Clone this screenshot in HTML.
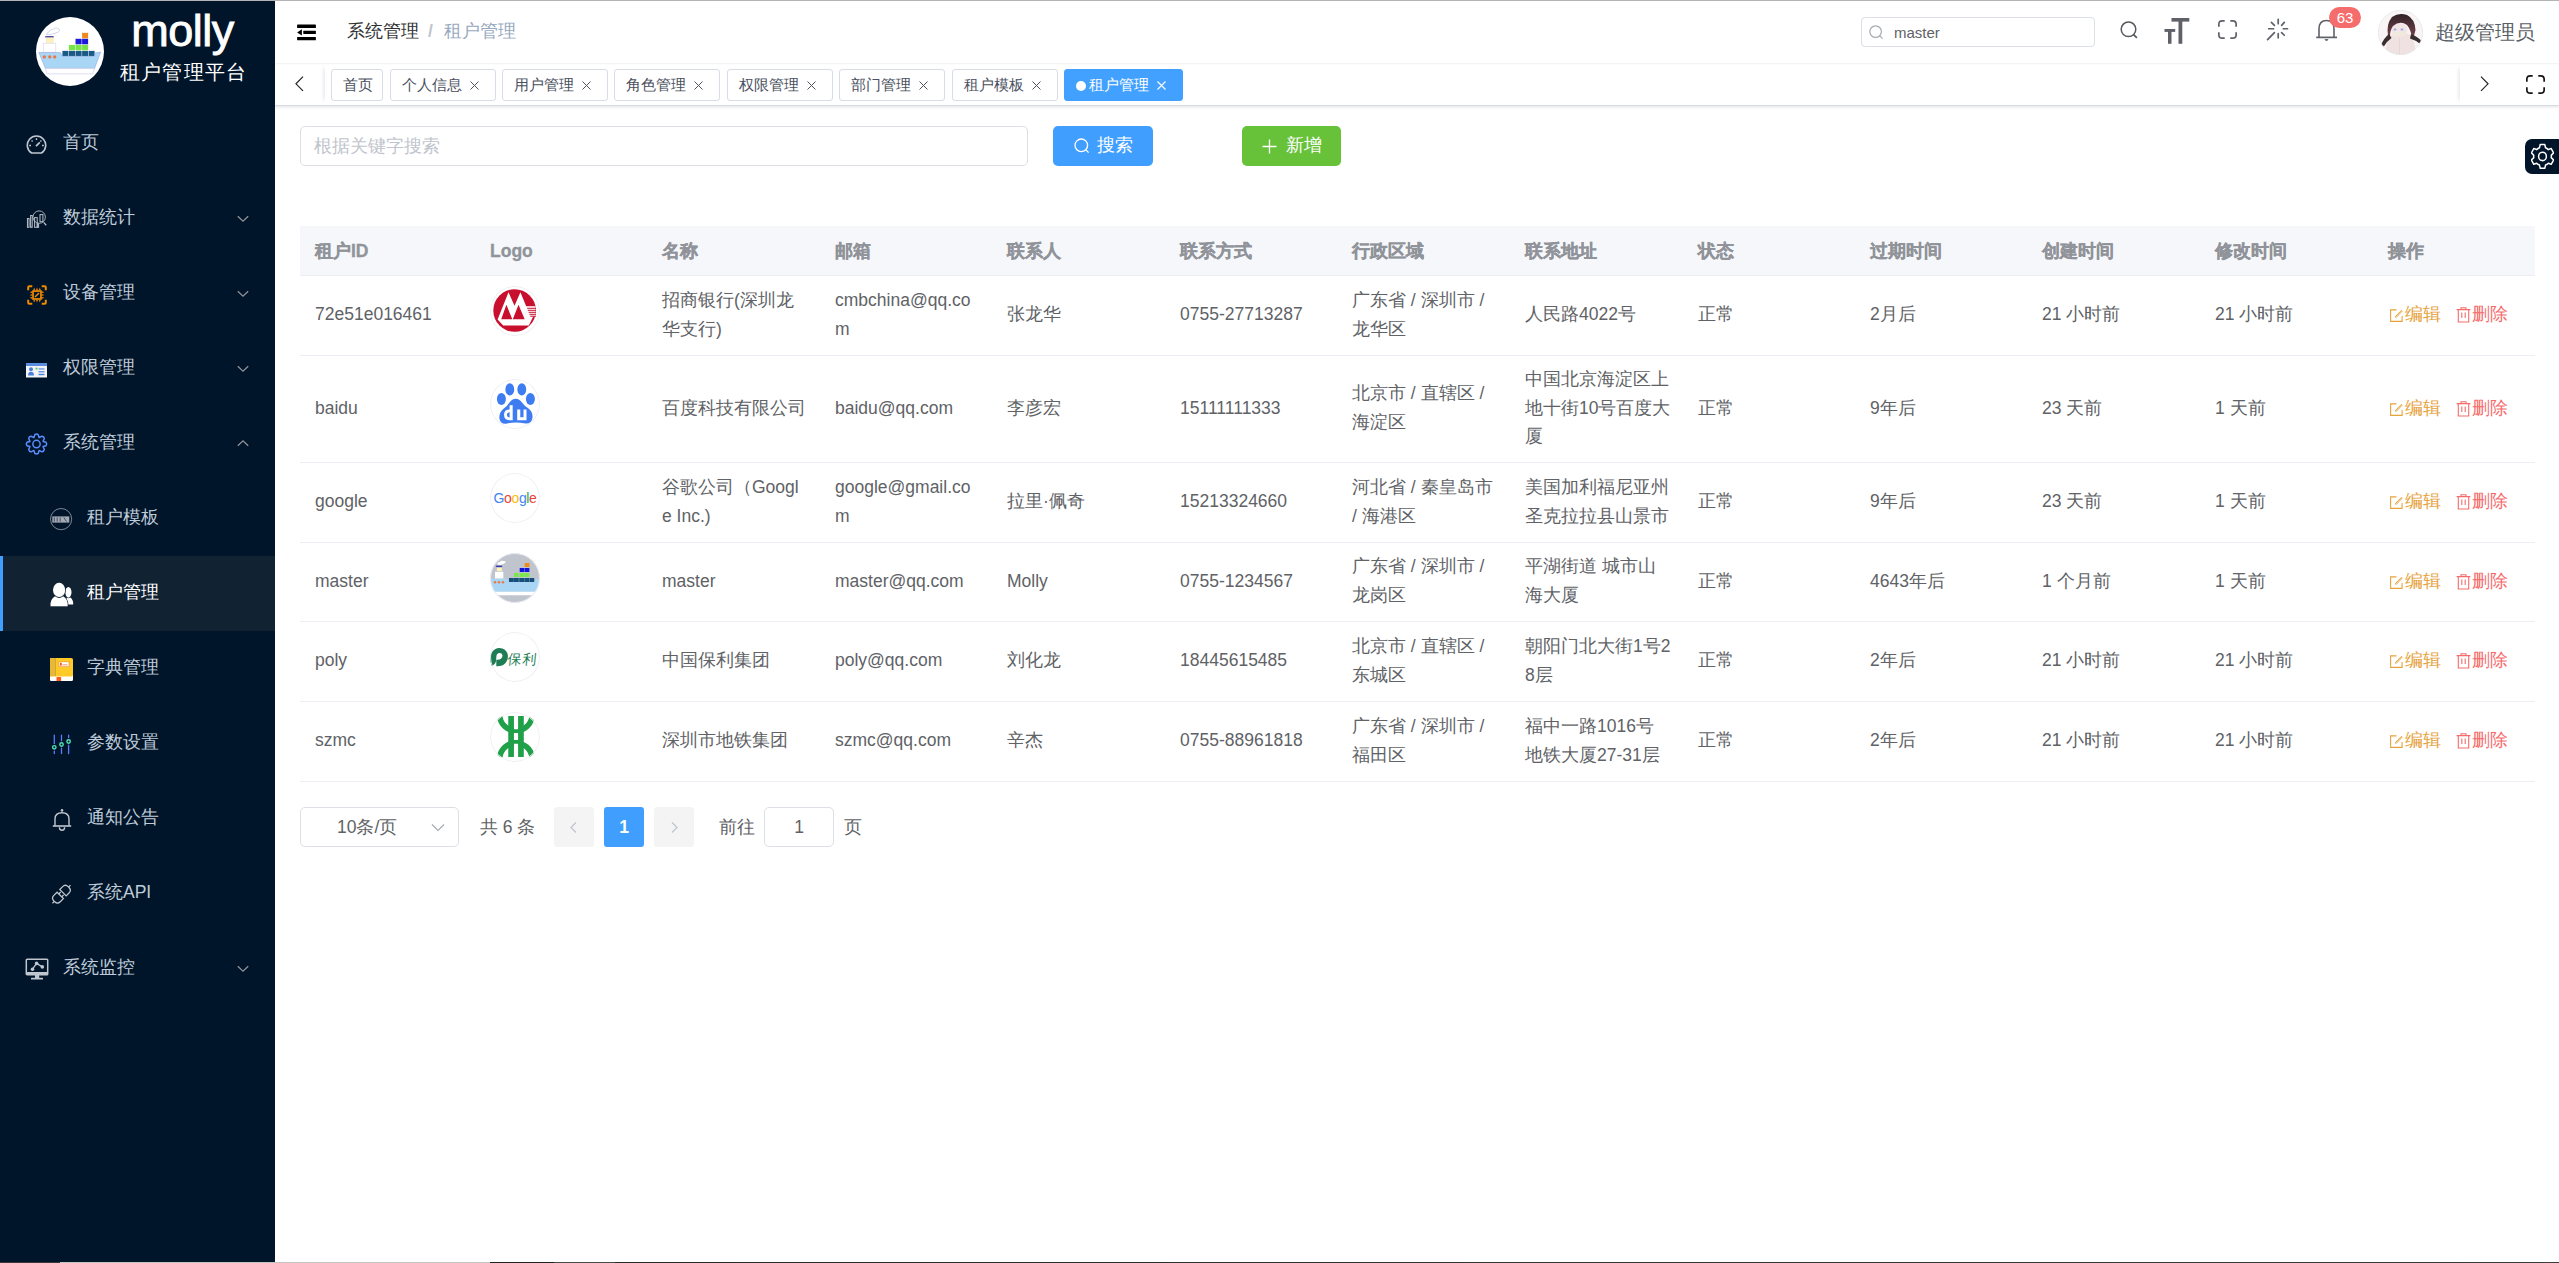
<!DOCTYPE html>
<html><head><meta charset="utf-8">
<style>
*{box-sizing:border-box;margin:0;padding:0}
html,body{width:2559px;height:1263px;overflow:hidden;background:#fff;font-family:"Liberation Sans",sans-serif;color:#606266}
#topline{position:absolute;left:0;top:0;width:2559px;height:1px;background:#b4b4b4;z-index:50}
#botline{position:absolute;left:0;top:1262px;width:2559px;height:1px;background:linear-gradient(to right,#3a3836 0,#3a3836 60px,#c4c4c0 60px,#c4c4c0 490px,#22211f 490px,#22211f 554px,#4a4a4a 554px,#4a4a4a 615px,#2a2a2a 615px,#3c3c3c 100%);z-index:50}
#side{position:absolute;left:0;top:0;width:275px;height:1263px;background:#001529}
.logo{position:absolute;left:36px;top:17px;width:68px;height:69px;border-radius:50%;background:#fff;overflow:hidden}
.brand{position:absolute;left:120px;top:1px;width:125px;text-align:center;color:#fff;font-size:45px;line-height:60px;-webkit-text-stroke:0.9px #fff;letter-spacing:-0.5px}
.brand2{position:absolute;left:120px;top:59px;width:132px;color:#fff;font-size:19.5px;line-height:26px;letter-spacing:1.2px;font-weight:500;white-space:nowrap}
.mi{position:absolute;left:0;width:275px;height:75px;color:#bfcbd9;font-size:17.5px}
.mi .t{position:absolute;left:62.5px;top:-1px;line-height:75px;white-space:nowrap}
.mi.sub .t{left:87px}
.mi svg.ic{position:absolute;left:25px;top:27px;width:22px;height:22px}
.mi.sub svg.ic{left:50px}
.mi svg.arr{position:absolute;left:236.5px;top:34px;width:12px;height:8px}
.mi.act{background:#112232;color:#fff}
.mi.act:before{content:"";position:absolute;left:0;top:0;width:3px;height:75px;background:#409eff}
#nav{position:absolute;left:275px;top:1px;width:2284px;height:62px;background:#fff;box-shadow:0 1px 1.5px rgba(0,0,0,.06);z-index:2}
.crumb{position:absolute;top:16px;font-size:17.5px;line-height:28px;white-space:nowrap}
#tags{position:absolute;left:275px;top:63px;width:2284px;height:43px;background:#fff;border-bottom:1px solid #d8dce5;box-shadow:0 1px 3px 0 rgba(0,0,0,.12)}
.tag{position:absolute;top:6px;height:32px;border:1px solid #d8dce5;border-radius:3px;background:#fff;color:#495060;font-size:15px;line-height:30px;padding-left:11px;white-space:nowrap}
.tag svg.x{position:absolute;top:11px;right:16px;width:9px;height:9px}
.tag.on{background:#42a1fe;border-color:#42a1fe;color:#fff}
.inp{position:absolute;border:1px solid #dcdfe6;border-radius:5px;background:#fff}
.btn{position:absolute;border-radius:5px;color:#fff;font-size:17.5px;white-space:nowrap}
#tbl{position:absolute;left:300px;top:226px;width:2235px}
.row{position:absolute;left:0;width:2235px;border-bottom:1px solid #ebeef5}
.row.h{background:#f5f7fa;color:#909399;font-weight:bold;-webkit-text-stroke:0.3px #909399}
.c{position:absolute;top:-1px;height:100%;display:flex;align-items:center;font-size:17.5px;line-height:28.75px;white-space:nowrap}
.lg{width:50px;height:50px;border-radius:50%;overflow:hidden;position:relative;background:#fff}
.lg:after{content:"";position:absolute;left:0;top:0;width:50px;height:50px;border-radius:50%;box-shadow:inset 0 0 0 1px #eceef3}
.lg svg{position:absolute;left:0;top:0}
.row.h .c{top:0.5px}
.op{color:#e6a23c}
.del{color:#f56c6c}
.pg{position:absolute;font-size:17.5px;white-space:nowrap;color:#606266}

</style></head><body>
<div id="topline"></div>
<div id="side">
  <div class="logo"><svg width="68" height="69" viewBox="0 0 68 69">
    <path d="M10.5,17.5 q0.5,-2.5 3,-2.8 q0.8,-2.8 4,-2.6 q1.5,-1.8 3.8,-0.8 q2.3,0.2 2.3,2.3 q-1.2,0.6 -1.6,1.8 q-2,-0.2 -3,1 q-2.5,-0.3 -3.8,1.1 q-2.5,0 -4.7,0z" fill="#fff" stroke="#c4c6e4" stroke-width="0.7"/>
    <rect x="9.4" y="19.1" width="8.2" height="1.6" fill="#3a3aa0"/>
    <rect x="10.5" y="20.7" width="6.6" height="5.5" fill="#fff2b8" stroke="#e0dcc0" stroke-width="0.4"/>
    <rect x="7.2" y="26.2" width="12.6" height="9" fill="#fff" stroke="#d4d4ea" stroke-width="0.6"/>
    <rect x="46.1" y="15.8" width="6" height="5.5" fill="#ef8a1e"/>
    <rect x="39.5" y="21.8" width="6.1" height="5.5" fill="#1a1ad8"/>
    <rect x="46.1" y="21.8" width="6" height="5.5" fill="#1a1ad8"/>
    <rect x="32.9" y="27.9" width="6.1" height="5.4" fill="#79e34a"/>
    <rect x="39.5" y="27.9" width="6.1" height="5.4" fill="#79e34a"/>
    <rect x="46.1" y="27.9" width="6" height="5.4" fill="#79e34a"/>
    <rect x="26.4" y="33.9" width="6" height="5.4" fill="#1b5a86"/>
    <rect x="32.9" y="33.9" width="6.1" height="5.4" fill="#1b5a86"/>
    <rect x="39.5" y="33.9" width="6.1" height="5.4" fill="#1b5a86"/>
    <rect x="46.1" y="33.9" width="6" height="5.4" fill="#1b5a86"/>
    <rect x="52.6" y="33.9" width="6" height="5.4" fill="#1b5a86"/>
    <path d="M2.8,35.5 L24.5,35.5 L26.4,39.3 L58.6,39.3 L58.6,36 L64.7,35 L58.6,51.4 L9.4,51.4 Z" fill="#a9d6f5" stroke="#8c9ce0" stroke-width="0.5"/>
    <path d="M9.4,51.4 L58.6,51.4 L56.5,56.9 L11,56.9 Z" fill="#fff" stroke="#c8c8e8" stroke-width="0.6"/>
    <circle cx="8.3" cy="39.9" r="1.7" fill="#e87a4a"/><circle cx="13.8" cy="39.9" r="1.7" fill="#e87a4a"/><circle cx="18.7" cy="39.9" r="1.7" fill="#e87a4a"/>
  </svg></div>
  <div class="brand">molly</div>
  <div class="brand2">租户管理平台</div>

  <div class="mi" style="top:106px"><svg class="ic" style="left:26px;top:29px;width:21px;height:19px" viewBox="0 0 21 19" fill="none" stroke="#c0c6d0" stroke-width="1.6"><path d="M5.6,18 A9.2,9.2 0 1 1 15.4,18 Z" stroke-linejoin="round"/><path d="M10.5,3.3V5M3.2,10.5H5M16,10.5H17.8M5.6,5.4L6.6,6.4M15.4,5.4L14.4,6.4" stroke-width="1.4"/><path d="M10,11.2L13.8,7.4" stroke-width="1.7"/></svg><span class="t">首页</span></div>

  <div class="mi" style="top:181px"><svg class="ic" style="left:26px;top:28px;width:21px;height:20px" viewBox="0 0 21 20" fill="none" stroke="#b8bfca" stroke-width="1"><rect x="1.45" y="9.5" width="1.6" height="8.8"/><rect x="4.6" y="6.5" width="1.6" height="11.8"/><rect x="8.6" y="8.6" width="2.6" height="9.7"/><rect x="11.3" y="14.9" width="1.3" height="3.4"/><rect x="14" y="5.6" width="2.9" height="7.1"/><circle cx="13.15" cy="8.1" r="6.2" stroke-width="0.9"/><path d="M17.7,13.4L20.2,16.2" stroke-width="1.3"/></svg><svg class="arr" viewBox="0 0 12 8" fill="none" stroke="#909399" stroke-width="1.3"><path d="M0.8,1.2L6,6.2L11.2,1.2"/></svg><span class="t">数据统计</span></div>

  <div class="mi" style="top:256px"><svg class="ic" style="left:26.5px;top:28.5px;width:20px;height:20px" viewBox="0 0 20 20"><path d="M1.2,5.3V2.3Q1.2,1.2 2.3,1.2H5.3M14.7,1.2H17.7Q18.8,1.2 18.8,2.3V5.3M18.8,14.7V17.7Q18.8,18.8 17.7,18.8H14.7M5.3,18.8H2.3Q1.2,18.8 1.2,17.7V14.7" fill="none" stroke="#f08a00" stroke-width="2"/><path d="M6.1,5.3L7.2,2.6L8.3,5.3ZM6.1,14.7L7.2,17.4L8.3,14.7ZM5.3,6.1L2.6,7.2L5.3,8.3ZM14.7,6.1L17.4,7.2L14.7,8.3ZM8.9,5.3L10,2.6L11.1,5.3ZM8.9,14.7L10,17.4L11.1,14.7ZM5.3,8.9L2.6,10L5.3,11.1ZM14.7,8.9L17.4,10L14.7,11.1ZM11.700000000000001,5.3L12.8,2.6L13.9,5.3ZM11.700000000000001,14.7L12.8,17.4L13.9,14.7ZM5.3,11.700000000000001L2.6,12.8L5.3,13.9ZM14.7,11.700000000000001L17.4,12.8L14.7,13.9Z" fill="#e07f00"/><rect x="5.2" y="5.2" width="9.6" height="9.6" fill="#f08a00"/><rect x="6.9" y="6.9" width="6.2" height="6.2" fill="#001529"/><path d="M8,12L12,8" stroke="#f08a00" stroke-width="1.4"/></svg><svg class="arr" viewBox="0 0 12 8" fill="none" stroke="#909399" stroke-width="1.3"><path d="M0.8,1.2L6,6.2L11.2,1.2"/></svg><span class="t">设备管理</span></div>

  <div class="mi" style="top:331px"><svg class="ic" style="left:26px;top:31.5px;width:21px;height:15px" viewBox="0 0 21 15"><rect x="0" y="0" width="21" height="14.5" fill="#f4f4f4"/><rect x="0" y="0" width="21" height="3" fill="#5a8de0"/><circle cx="5" cy="6.3" r="2" fill="#4a7fd8"/><path d="M2,12.5Q2,8.8 5,8.8Q8,8.8 8,12.5Z" fill="#4a7fd8"/><circle cx="10.5" cy="5.7" r="1.1" fill="#5ccf6a"/><rect x="12.5" y="5.2" width="6" height="1.5" fill="#7ea6e8"/><rect x="12.5" y="8" width="6" height="1.5" fill="#6a98e4"/><rect x="12.5" y="10.8" width="6" height="1.4" fill="#4a7fd8"/></svg><svg class="arr" viewBox="0 0 12 8" fill="none" stroke="#909399" stroke-width="1.3"><path d="M0.8,1.2L6,6.2L11.2,1.2"/></svg><span class="t">权限管理</span></div>

  <div class="mi" style="top:406px"><svg class="ic" style="left:24px;top:26px;width:25px;height:25px" viewBox="-0.6 -0.6 25.2 25.2" fill="none" stroke="#5a8cff" stroke-width="1.5" stroke-linejoin="round"><path d="M10.3,1.6 Q12,0.3 13.7,1.6 L14.6,4.6 L17.5,3.2 Q19.6,3.4 19.9,5.5 L18.6,8.4 L21.6,9.3 Q22.9,11 21.6,12.7 L18.6,13.6 L19.9,16.5 Q19.6,18.6 17.5,18.9 L14.6,17.5 L13.7,20.5 Q12,21.8 10.3,20.5 L9.4,17.5 L6.5,18.9 Q4.4,18.6 4.1,16.5 L5.4,13.6 L2.4,12.7 Q1.1,11 2.4,9.3 L5.4,8.4 L4.1,5.5 Q4.4,3.4 6.5,3.2 L9.4,4.6 Z" transform="translate(0,0.5)"/><circle cx="12" cy="11.5" r="3.7"/></svg><svg class="arr" style="top:32.5px" viewBox="0 0 12 8" fill="none" stroke="#909399" stroke-width="1.3"><path d="M0.8,6.8L6,1.8L11.2,6.8"/></svg><span class="t">系统管理</span></div>

  <div class="mi sub" style="top:481px"><svg class="ic" style="left:50.3px;top:27.3px;width:23px;height:23px" viewBox="0 0 23 23"><circle cx="11.1" cy="11.1" r="10.6" fill="none" stroke="#8a93a0" stroke-width="0.9"/><rect x="2.3" y="8.4" width="17" height="6.2" fill="#a2a9b5"/><path d="M4.3,9.4V13.6M7.2,9.4V13.6M10.2,9.4V13.6M13.8,9.4L16.5,13.6" stroke="#1b2a3c" stroke-width="0.7"/></svg><span class="t">租户模板</span></div>

  <div class="mi sub act" style="top:556px"><svg class="ic" style="left:49.5px;top:26px;width:25px;height:26px" viewBox="0 0 25 26" fill="#fff"><ellipse cx="18.4" cy="10.3" rx="3.1" ry="5.4"/><path d="M15.5,22.6 H23.2 Q23.6,18.5 20.5,15.5 Q18.6,16.6 16.5,15.8 Z"/><g stroke="#112232" stroke-width="1.3"><path d="M0.5,24.2 Q0,17.2 5,14.3 Q9.1,17.6 13.2,14.3 Q18.2,17.2 17.7,24.2 Z"/><ellipse cx="9.1" cy="7.9" rx="6.1" ry="7.1"/></g><path d="M0.5,24.2 Q0,17.2 5,14.3 Q9.1,17.6 13.2,14.3 Q18.2,17.2 17.7,24.2 Z"/><ellipse cx="9.1" cy="7.9" rx="6.1" ry="7.1"/></svg><span class="t">租户管理</span></div>

  <div class="mi sub" style="top:631px"><svg class="ic" style="left:50px;top:27px;width:23px;height:23px" viewBox="0 0 23 23"><rect x="0" y="0" width="23" height="23" rx="1.8" fill="#ffca28"/><rect x="0" y="0" width="5.5" height="18.5" fill="#e6b83a"/><rect x="5.3" y="0" width="0.7" height="18.5" fill="#caa02a"/><path d="M1.2,18.5 H21.5 Q23,18 23,17 V21.3 Q23,23 21.5,23 H1.5 Q0,23 0,21.5 V19.8 Q0.2,18.5 1.2,18.5Z" fill="#fff"/><rect x="6.5" y="19" width="4.6" height="4" fill="#ff5a1f"/><rect x="8.5" y="3.5" width="11" height="5.5" fill="#e9a030"/><rect x="9.3" y="4.2" width="9.4" height="4.1" fill="#fff"/><rect x="10" y="4.8" width="1.8" height="2.8" fill="#ff5522"/><rect x="12.5" y="6" width="5" height="1.5" fill="#ffb0a0"/></svg><span class="t">字典管理</span></div>

  <div class="mi sub" style="top:706px"><svg class="ic" style="left:50px;top:27px;width:23px;height:23px" viewBox="0 0 23 23" fill="none" stroke-linecap="round"><path d="M4.3,2.2V10.6M4.3,18.2V20.6M11.5,2.2V7.8M11.5,15.2V20.6M18.6,2.2V4.6M18.6,12.2V20.6" stroke="#5b7cff" stroke-width="1.3"/><circle cx="4.3" cy="14.3" r="1.7" stroke="#4fe3b8" stroke-width="1.4"/><circle cx="11.5" cy="11.5" r="1.7" stroke="#4fe3b8" stroke-width="1.4"/><circle cx="18.6" cy="8.5" r="1.7" stroke="#4fe3b8" stroke-width="1.4"/></svg><span class="t">参数设置</span></div>

  <div class="mi sub" style="top:781px"><svg class="ic" style="left:51.5px;top:26.5px;width:20px;height:24px" viewBox="0 0 20 24" fill="none" stroke="#c0c6d0" stroke-width="1.4"><circle cx="10" cy="2.4" r="1.3" fill="#c0c6d0" stroke="none"/><path d="M3,17.8V11Q3,4.8 10,4.8Q17,4.8 17,11V17.8"/><path d="M0.8,18H19.2" stroke-width="1.6"/><path d="M7.4,19.2Q7.4,22.3 10,22.3Q12.6,22.3 12.6,19.2"/></svg><span class="t">通知公告</span></div>

  <div class="mi sub" style="top:856px"><svg class="ic" style="left:50px;top:26px;width:24px;height:24px" viewBox="0 0 24 24" fill="none" stroke="#c0c6d0" stroke-width="1.25"><g transform="translate(11.5,12.15) rotate(-45)"><path d="M-1.8,-4.5 H-6.3 Q-10.2,-4.5 -10.2,-0.6 V0.6 Q-10.2,4.5 -6.3,4.5 H-1.8 Z"/><path d="M2.1,-4.5 H6.1 Q10,-4.5 10,-0.6 V0.6 Q10,4.5 6.1,4.5 H2.1 Z"/><path d="M-1.8,-2.1 H0.9 M-1.8,2.1 H0.9 M-12.8,0 H-10.2 M10,0 H12.7"/></g></svg><span class="t">系统API</span></div>

  <div class="mi" style="top:931px"><svg class="ic" style="left:24.5px;top:27px;width:24px;height:23px" viewBox="0 0 24 23" fill="none" stroke="#c0c6d0"><rect x="1.3" y="1.3" width="21.4" height="15.5" rx="0.8" stroke-width="1.5"/><rect x="1.3" y="14" width="21.4" height="2.8" fill="#c0c6d0" stroke="none"/><rect x="10" y="16.5" width="4.2" height="4" fill="#c0c6d0" stroke="none"/><rect x="6" y="19.8" width="12" height="1.8" rx="0.5" fill="#c0c6d0" stroke="none"/><path d="M7.5,11.2L11.6,5.4L17.3,8.9" stroke-width="1.3"/><circle cx="7.5" cy="11.2" r="1.8" fill="#c0c6d0" stroke="none"/><circle cx="11.6" cy="5.4" r="1.8" fill="#c0c6d0" stroke="none"/><circle cx="17.3" cy="8.9" r="1.8" fill="#c0c6d0" stroke="none"/></svg><svg class="arr" viewBox="0 0 12 8" fill="none" stroke="#909399" stroke-width="1.3"><path d="M0.8,1.2L6,6.2L11.2,1.2"/></svg><span class="t">系统监控</span></div>
</div>

<div id="nav">
  <svg style="position:absolute;left:21px;top:23px" width="21" height="17" viewBox="0 0 21 17"><rect x="1.1" y="0.4" width="18.8" height="3.5" rx="0.5" fill="#000"/><rect x="7.3" y="6.8" width="12.6" height="3.3" rx="0.5" fill="#000"/><path d="M1.1,8.4L5.9,5.3V11.5Z" fill="#000"/><rect x="1.1" y="12.9" width="18.8" height="3.3" rx="0.5" fill="#000"/></svg>
  <div class="crumb" style="left:72px;color:#303133">系统管理</div>
  <div class="crumb" style="left:153px;color:#c0c4cc;font-weight:bold">/</div>
  <div class="crumb" style="left:169px;color:#97a8be">租户管理</div>

  <div class="inp" style="left:1586px;top:16px;width:234px;height:30px;border-radius:4px"></div>
  <svg style="position:absolute;left:1594px;top:24px" width="15" height="15" viewBox="0 0 15 15" fill="none" stroke="#a8abb2" stroke-width="1.2"><circle cx="6.6" cy="6.6" r="5.8"/><path d="M10.8,10.8L13.6,13.6"/></svg>
  <div style="position:absolute;left:1619px;top:17px;line-height:30px;font-size:15px;color:#606266">master</div>

  <svg style="position:absolute;left:1845px;top:20px" width="19" height="19" viewBox="0 0 19 19" fill="none" stroke="#55585e" stroke-width="1.5"><circle cx="8.5" cy="8.3" r="7.3"/><path d="M13.6,13.6L16.9,16.9" stroke-width="1.7"/></svg>
  <svg style="position:absolute;left:1889px;top:16px" width="27" height="28" viewBox="0 0 27 28" fill="#5e6168"><rect x="7.5" y="1" width="17.8" height="3.6"/><rect x="14.5" y="1" width="3.8" height="25.8"/><rect x="0.5" y="12" width="10.7" height="2.9"/><rect x="4" y="12" width="3.5" height="14.8"/></svg>
  <svg style="position:absolute;left:1943px;top:19px" width="19" height="19" viewBox="0 0 19 19" fill="none" stroke="#5e6168" stroke-width="1.7"><path d="M6.7,0.85H4.3Q0.85,0.85 0.85,4.3V6.7M12.3,0.85H14.7Q18.15,0.85 18.15,4.3V6.7M18.15,12.3V14.7Q18.15,18.15 14.7,18.15H12.3M6.7,18.15H4.3Q0.85,18.15 0.85,14.7V12.3"/></svg>
  <svg style="position:absolute;left:1990px;top:17px" width="26" height="26" viewBox="0 0 26 26" fill="none" stroke="#5e6168" stroke-width="1.7" stroke-linecap="round"><path d="M13.20,1.45V5.75M13.20,15.65V19.85M3.70,10.75H8.50M18.30,10.75H22.50M6.40,4.35L9.40,7.35M19.30,4.45L16.60,7.35M16.60,14.55L19.30,17.25M9.40,14.55L2.60,21.55"/></svg>
  <svg style="position:absolute;left:2040px;top:16px" width="25" height="26" viewBox="0 0 25 26" fill="none" stroke="#5e6168" stroke-width="1.6"><path d="M4,20V12Q4,3.5 11.5,3.5Q19,3.5 19,12V20"/><path d="M1.2,20.4H22" stroke-width="1.7"/><path d="M10,22.5H13L11.5,24Z" fill="#5e6168" stroke-width="0.8"/></svg>
  <div style="position:absolute;left:2054px;top:6px;width:32px;height:21px;border-radius:10.5px;background:#f56c6c;color:#fff;font-size:15px;line-height:21px;text-align:center">63</div>

  <svg style="position:absolute;left:2103px;top:9px" width="45" height="45" viewBox="0 0 45 45"><defs><clipPath id="av"><circle cx="22.5" cy="22.5" r="22.5"/></clipPath><linearGradient id="hg" x1="0" y1="0" x2="0" y2="1"><stop offset="0" stop-color="#2e2226"/><stop offset="1" stop-color="#7a4450"/></linearGradient></defs><g clip-path="url(#av)"><rect width="45" height="45" fill="#f8f5f4"/><path d="M8,45 Q7,30 14,24 Q22,21 31,24 Q38,30 37,45Z" fill="#efe2e0"/><path d="M21.5,45 V28" stroke="#e0cfcf" stroke-width="0.6"/><ellipse cx="21.5" cy="20" rx="8" ry="7" fill="#f3e4e6"/><path d="M10,26 Q8,14 14,7 Q21,2 29,5 Q37,9 37.5,20 Q37,25 34,28 Q33,20 29,15 Q22,10 15,16 Q12,20 12,27Z" fill="url(#hg)"/><path d="M11,24 Q6,28 3,35 L5.5,37 Q9,31 13.5,28Z" fill="#3a2d30"/><path d="M33,24 Q40,27 43.5,31 L41.5,33.5 Q37,30 32,28.5Z" fill="#3a2d30"/><ellipse cx="17" cy="19.5" rx="1.5" ry="0.9" fill="#8fb0d8"/><ellipse cx="24" cy="19.5" rx="1.5" ry="0.9" fill="#8fb0d8"/><path d="M15,23 Q21.5,21 28,23 L28,26 Q21.5,24 15,26Z" fill="#f0ead8"/></g><circle cx="22.5" cy="22.5" r="22.1" fill="none" stroke="#e6e9ef" stroke-width="0.8"/></svg>
  <div style="position:absolute;left:2159.5px;top:17px;font-size:19.8px;line-height:28px;color:#5a5e66;white-space:nowrap">超级管理员</div>
</div>
<div id="tags">
  <svg style="position:absolute;left:20px;top:13px" width="9" height="16" viewBox="0 0 9 16" fill="none" stroke="#222" stroke-width="1.2"><path d="M8,0.7L1,7.8L8,14.9"/></svg>
  <div style="position:absolute;left:50px;top:3px;width:8px;height:36px;box-shadow:-3px 0 4px -2px rgba(0,0,0,.12)"></div>
  <div class="tag" style="left:56px;width:52px">首页</div>
  <div class="tag" style="left:115px;width:106px">个人信息<svg class="x" viewBox="0 0 9 9" stroke="#50545c" stroke-width="1"><path d="M0.5,0.5L8.5,8.5M8.5,0.5L0.5,8.5"/></svg></div>
  <div class="tag" style="left:227px;width:106px">用户管理<svg class="x" viewBox="0 0 9 9" stroke="#50545c" stroke-width="1"><path d="M0.5,0.5L8.5,8.5M8.5,0.5L0.5,8.5"/></svg></div>
  <div class="tag" style="left:339px;width:106px">角色管理<svg class="x" viewBox="0 0 9 9" stroke="#50545c" stroke-width="1"><path d="M0.5,0.5L8.5,8.5M8.5,0.5L0.5,8.5"/></svg></div>
  <div class="tag" style="left:452px;width:106px">权限管理<svg class="x" viewBox="0 0 9 9" stroke="#50545c" stroke-width="1"><path d="M0.5,0.5L8.5,8.5M8.5,0.5L0.5,8.5"/></svg></div>
  <div class="tag" style="left:564px;width:106px">部门管理<svg class="x" viewBox="0 0 9 9" stroke="#50545c" stroke-width="1"><path d="M0.5,0.5L8.5,8.5M8.5,0.5L0.5,8.5"/></svg></div>
  <div class="tag" style="left:677px;width:106px">租户模板<svg class="x" viewBox="0 0 9 9" stroke="#50545c" stroke-width="1"><path d="M0.5,0.5L8.5,8.5M8.5,0.5L0.5,8.5"/></svg></div>
  <div class="tag on" style="left:789px;width:119px;padding-left:24px"><span style="position:absolute;left:11px;top:10.5px;width:10px;height:10px;border-radius:50%;background:#fff"></span>租户管理<svg class="x" viewBox="0 0 9 9" stroke="#fff" stroke-width="1.1"><path d="M0.5,0.5L8.5,8.5M8.5,0.5L0.5,8.5"/></svg></div>
  <div style="position:absolute;left:2185px;top:3px;width:8px;height:36px;box-shadow:-3px 0 4px -2px rgba(0,0,0,.12)"></div>
  <svg style="position:absolute;left:2205px;top:13px" width="9" height="16" viewBox="0 0 9 16" fill="none" stroke="#222" stroke-width="1.2"><path d="M1,0.7L8,7.8L1,14.9"/></svg>
  <svg style="position:absolute;left:2251px;top:11.5px" width="19" height="19" viewBox="0 0 19 19" fill="none" stroke="#151515" stroke-width="1.7"><path d="M6.7,0.85H4.3Q0.85,0.85 0.85,4.3V6.7M12.3,0.85H14.7Q18.15,0.85 18.15,4.3V6.7M18.15,12.3V14.7Q18.15,18.15 14.7,18.15H12.3M6.7,18.15H4.3Q0.85,18.15 0.85,14.7V12.3"/></svg>
</div>
<div style="position:absolute;left:2525px;top:139px;width:40px;height:35px;border-radius:7px;background:#001529"><svg style="position:absolute;left:6px;top:4px" width="23" height="26" viewBox="0 0 25 26" preserveAspectRatio="none" fill="none" stroke="#fff" stroke-width="1.6" stroke-linejoin="round"><path d="M10,1.5H15L15.8,4.8Q17.5,5.5 18.8,6.6L22,5.6L24.5,9.9L22,12.3Q22.2,13 22,14.7L24.5,17L22,21.3L18.8,20.3Q17.5,21.4 15.8,22.1L15,25.3H10L9.2,22.1Q7.5,21.4 6.2,20.3L3,21.3L0.5,17L3,14.7Q2.8,13 3,12.3L0.5,9.9L3,5.6L6.2,6.6Q7.5,5.5 9.2,4.8Z"/><circle cx="12.5" cy="13.4" r="4.2"/></svg></div>

<div class="inp" style="left:300px;top:126px;width:728px;height:40px"><span style="position:absolute;left:13px;top:0;line-height:38px;font-size:17.5px;color:#c0c4cc">根据关键字搜索</span></div>
<div class="btn" style="left:1053px;top:126px;width:100px;height:40px;background:#409eff"><svg style="position:absolute;left:21px;top:12px" width="16" height="16" viewBox="0 0 16 16" fill="none" stroke="#fff" stroke-width="1.3"><circle cx="7.3" cy="7.3" r="6.3"/><path d="M11.8,11.8L14.6,14.6"/></svg><span style="position:absolute;left:44px;top:-1.5px;line-height:40px">搜索</span></div>
<div class="btn" style="left:1242px;top:126px;width:99px;height:40px;background:#67c23a"><svg style="position:absolute;left:20px;top:12.5px" width="15" height="15" viewBox="0 0 15 15" stroke="#fff" stroke-width="1.3"><path d="M7.5,0.5V14.5M0.5,7.5H14.5"/></svg><span style="position:absolute;left:44px;top:-1px;line-height:40px">新增</span></div>
<div id="tbl">
<div class="row h" style="top:0;height:50px"><div class="c" style="left:15px">租户ID</div><div class="c" style="left:190px">Logo</div><div class="c" style="left:362px">名称</div><div class="c" style="left:535px">邮箱</div><div class="c" style="left:707px">联系人</div><div class="c" style="left:880px">联系方式</div><div class="c" style="left:1052px">行政区域</div><div class="c" style="left:1225px">联系地址</div><div class="c" style="left:1398px">状态</div><div class="c" style="left:1570px">过期时间</div><div class="c" style="left:1742px">创建时间</div><div class="c" style="left:1915px">修改时间</div><div class="c" style="left:2088px">操作</div></div>
<div class="row" style="top:50px;height:80px"><div class="c" style="left:15px">72e51e016461</div><div class="lg" style="position:absolute;left:190px;top:10px"><svg width="50" height="50" viewBox="0 0 50 50"><circle cx="24.6" cy="24.5" r="21.3" fill="#c8102e"/><path d="M7.6,33.4 L18.5,6.2 L24.5,19.8 L30.4,6.2 L36.2,20.3 L45.5,20.3 L45.8,30.5 L43.2,30.5 L38.8,39.6 L13.2,39.6 Z" fill="#fff"/><path d="M11.2,33.3 L16.4,18.7 L22.3,33.3Z M22.8,33.3 L28.5,18.7 L34.7,33.3Z" fill="#c8102e"/><path d="M37.2,22.3H46M37.8,24.3H46M38.6,26.3H46M39.4,28.3H46M40.2,30.2H46" stroke="#c8102e" stroke-width="1"/></svg></div><div class="c" style="left:362px">招商银行(深圳龙<br>华支行)</div><div class="c" style="left:535px">cmbchina@qq.co<br>m</div><div class="c" style="left:707px">张龙华</div><div class="c" style="left:880px">0755-27713287</div><div class="c" style="left:1052px">广东省 / 深圳市 /<br>龙华区</div><div class="c" style="left:1225px">人民路4022号</div><div class="c" style="left:1398px">正常</div><div class="c" style="left:1570px">2月后</div><div class="c" style="left:1742px">21 小时前</div><div class="c" style="left:1915px">21 小时前</div><div class="c" style="left:2089.5px"><span class="op" style="display:flex;align-items:center"><svg style="margin-right:2px;margin-top:2px" width="13" height="13" viewBox="0 0 13 13" fill="none" stroke="#e6a23c" stroke-width="1.1"><path d="M6.5,0.9H0.6V12.4H12.1V7"/><path d="M5.2,7.8L11.2,1.6Q12,1.3 12.2,2.2L6.1,8.5Z" stroke-width="1"/></svg>编辑</span><span class="del" style="display:flex;align-items:center;margin-left:15.5px"><svg style="margin-right:1px;margin-top:1px" width="15" height="16" viewBox="0 0 15 16" fill="none" stroke="#f56c6c" stroke-width="1.1"><path d="M0.6,2.6H14.4M5,2.6V0.8H10V2.6M2.3,2.6V15H12.7V2.6M5.8,5.5V11M9.2,5.5V11"/></svg>删除</span></div></div>
<div class="row" style="top:130px;height:107px"><div class="c" style="left:15px">baidu</div><div class="lg" style="position:absolute;left:190px;top:23px"><svg width="50" height="50" viewBox="0 0 50 50" fill="#3e7cf2"><ellipse cx="19.8" cy="10.4" rx="4.4" ry="6.1"/><ellipse cx="31.8" cy="10.4" rx="4.4" ry="6.1"/><ellipse cx="11.4" cy="20" rx="4.5" ry="6"/><ellipse cx="40.4" cy="20" rx="4.5" ry="6"/><path d="M25.6,19.7 Q29.5,19.7 32,23.5 Q34,26.5 38.5,29.5 Q43,33 42.5,38.5 Q42,44.8 35.5,44.5 Q30,43.5 25.8,43.5 Q21.5,43.5 16,44.8 Q9.5,45 9.3,38.5 Q9.5,33 13.5,29.8 Q17.5,26.8 19.5,23.5 Q22,19.7 25.6,19.7Z"/><path d="M19.6,26.2H22.7V41.2H19.3Q14,41.2 14,35.8Q14,30.4 19.6,30.4Z M19.6,33.2Q17,33.2 17,35.8Q17,38.4 19.6,38.4Z M27.2,30.4H30.3V38.3H33.5V30.4H36.5V41.2H27.2Z" fill="#fff" fill-rule="evenodd"/></svg></div><div class="c" style="left:362px">百度科技有限公司</div><div class="c" style="left:535px">baidu@qq.com</div><div class="c" style="left:707px">李彦宏</div><div class="c" style="left:880px">15111111333</div><div class="c" style="left:1052px">北京市 / 直辖区 /<br>海淀区</div><div class="c" style="left:1225px">中国北京海淀区上<br>地十街10号百度大<br>厦</div><div class="c" style="left:1398px">正常</div><div class="c" style="left:1570px">9年后</div><div class="c" style="left:1742px">23 天前</div><div class="c" style="left:1915px">1 天前</div><div class="c" style="left:2089.5px"><span class="op" style="display:flex;align-items:center"><svg style="margin-right:2px;margin-top:2px" width="13" height="13" viewBox="0 0 13 13" fill="none" stroke="#e6a23c" stroke-width="1.1"><path d="M6.5,0.9H0.6V12.4H12.1V7"/><path d="M5.2,7.8L11.2,1.6Q12,1.3 12.2,2.2L6.1,8.5Z" stroke-width="1"/></svg>编辑</span><span class="del" style="display:flex;align-items:center;margin-left:15.5px"><svg style="margin-right:1px;margin-top:1px" width="15" height="16" viewBox="0 0 15 16" fill="none" stroke="#f56c6c" stroke-width="1.1"><path d="M0.6,2.6H14.4M5,2.6V0.8H10V2.6M2.3,2.6V15H12.7V2.6M5.8,5.5V11M9.2,5.5V11"/></svg>删除</span></div></div>
<div class="row" style="top:237px;height:80px"><div class="c" style="left:15px">google</div><div class="lg" style="position:absolute;left:190px;top:10px"><div style="position:absolute;left:0;top:0;width:50px;height:50px;font-family:'Liberation Sans',sans-serif;font-size:14px;line-height:50px;text-align:center;letter-spacing:-0.4px;padding-left:0px"><span style="color:#4285f4">G</span><span style="color:#ea4335">o</span><span style="color:#fbbc05">o</span><span style="color:#4285f4">g</span><span style="color:#34a853">l</span><span style="color:#ea4335">e</span></div></div><div class="c" style="left:362px">谷歌公司（Googl<br>e Inc.)</div><div class="c" style="left:535px">google@gmail.co<br>m</div><div class="c" style="left:707px">拉里·佩奇</div><div class="c" style="left:880px">15213324660</div><div class="c" style="left:1052px">河北省 / 秦皇岛市<br>/ 海港区</div><div class="c" style="left:1225px">美国加利福尼亚州<br>圣克拉拉县山景市</div><div class="c" style="left:1398px">正常</div><div class="c" style="left:1570px">9年后</div><div class="c" style="left:1742px">23 天前</div><div class="c" style="left:1915px">1 天前</div><div class="c" style="left:2089.5px"><span class="op" style="display:flex;align-items:center"><svg style="margin-right:2px;margin-top:2px" width="13" height="13" viewBox="0 0 13 13" fill="none" stroke="#e6a23c" stroke-width="1.1"><path d="M6.5,0.9H0.6V12.4H12.1V7"/><path d="M5.2,7.8L11.2,1.6Q12,1.3 12.2,2.2L6.1,8.5Z" stroke-width="1"/></svg>编辑</span><span class="del" style="display:flex;align-items:center;margin-left:15.5px"><svg style="margin-right:1px;margin-top:1px" width="15" height="16" viewBox="0 0 15 16" fill="none" stroke="#f56c6c" stroke-width="1.1"><path d="M0.6,2.6H14.4M5,2.6V0.8H10V2.6M2.3,2.6V15H12.7V2.6M5.8,5.5V11M9.2,5.5V11"/></svg>删除</span></div></div>
<div class="row" style="top:317px;height:79px"><div class="c" style="left:15px">master</div><div class="lg" style="position:absolute;left:190px;top:10px"><svg width="50" height="50" viewBox="0 0 50 50"><circle cx="25" cy="25" r="25" fill="#c0c4cc"/><path d="M7,11.3 q0.7,-2.2 3,-2.2 q1.2,-1.8 3.4,-1 q1.8,-0.6 2.4,1.2 q-1.5,0.4 -1.8,1.8 q-2.2,0 -3.4,0.8 q-2.2,0 -3.6,-0.6z" fill="#fff"/><rect x="5.9" y="12.6" width="6.2" height="1.4" fill="#3a3aa8"/><rect x="6.9" y="15" width="5" height="3.1" fill="#fff3b5"/><rect x="5" y="18.75" width="8.3" height="6.8" fill="#fff"/><rect x="34.7" y="10" width="4.7" height="4" fill="#ef8a1e"/><rect x="29.7" y="15" width="4.7" height="4" fill="#1414d6"/><rect x="34.7" y="15" width="4.7" height="4" fill="#1414d6"/><rect x="24" y="20" width="4.7" height="4" fill="#7ae84a"/><rect x="29.7" y="20" width="4.7" height="4" fill="#7ae84a"/><rect x="34.7" y="20" width="4.7" height="4" fill="#7ae84a"/><rect x="19" y="25" width="4.8" height="4" fill="#154f7a"/><rect x="24" y="25" width="4.8" height="4" fill="#154f7a"/><rect x="29.2" y="25" width="4.8" height="4" fill="#154f7a"/><rect x="34.3" y="25" width="4.8" height="4" fill="#154f7a"/><rect x="39.4" y="25" width="4.8" height="4" fill="#154f7a"/><path d="M1,25.7 L16.5,25.7 L18.7,29 L44.5,29 L46,25.7 L49.4,25.7 L48,38.7 L2.4,38.7 Z" fill="#a8d6f4"/><path d="M3,38.7 L47.4,38.7 L46.6,42.3 L4,42.3 Z" fill="#fff"/><circle cx="5" cy="29.3" r="1.3" fill="#ea7a4a"/><circle cx="9" cy="29.3" r="1.3" fill="#ea7a4a"/><circle cx="13" cy="29.3" r="1.3" fill="#ea7a4a"/></svg></div><div class="c" style="left:362px">master</div><div class="c" style="left:535px">master@qq.com</div><div class="c" style="left:707px">Molly</div><div class="c" style="left:880px">0755-1234567</div><div class="c" style="left:1052px">广东省 / 深圳市 /<br>龙岗区</div><div class="c" style="left:1225px">平湖街道 城市山<br>海大厦</div><div class="c" style="left:1398px">正常</div><div class="c" style="left:1570px">4643年后</div><div class="c" style="left:1742px">1 个月前</div><div class="c" style="left:1915px">1 天前</div><div class="c" style="left:2089.5px"><span class="op" style="display:flex;align-items:center"><svg style="margin-right:2px;margin-top:2px" width="13" height="13" viewBox="0 0 13 13" fill="none" stroke="#e6a23c" stroke-width="1.1"><path d="M6.5,0.9H0.6V12.4H12.1V7"/><path d="M5.2,7.8L11.2,1.6Q12,1.3 12.2,2.2L6.1,8.5Z" stroke-width="1"/></svg>编辑</span><span class="del" style="display:flex;align-items:center;margin-left:15.5px"><svg style="margin-right:1px;margin-top:1px" width="15" height="16" viewBox="0 0 15 16" fill="none" stroke="#f56c6c" stroke-width="1.1"><path d="M0.6,2.6H14.4M5,2.6V0.8H10V2.6M2.3,2.6V15H12.7V2.6M5.8,5.5V11M9.2,5.5V11"/></svg>删除</span></div></div>
<div class="row" style="top:396px;height:80px"><div class="c" style="left:15px">poly</div><div class="lg" style="position:absolute;left:190px;top:10px"><svg width="50" height="50" viewBox="0 0 50 50"><path d="M1.2,34.2 Q-1.5,26 1.5,21 Q4.5,15.9 9.5,15.9 Q15.5,16 17.5,21.5 Q19,27 15.5,31 Q12.5,34.5 6.3,34.2 L6.3,27.8 Q9.5,28 11,26.8 Q12.6,25.2 12.5,23.5 Q12,21 9.5,21.1 Q6.6,21.3 6.4,24.5 L6,29 Q5.5,32.5 1.2,34.2Z" fill="#1f7d55"/><text x="20.5" y="32.3" font-family="Liberation Serif, serif" font-size="14" font-weight="400" fill="#1f7d55" letter-spacing="1.2" transform="translate(20.5,0) skewX(-6) translate(-20.5,0)">保利</text></svg></div><div class="c" style="left:362px">中国保利集团</div><div class="c" style="left:535px">poly@qq.com</div><div class="c" style="left:707px">刘化龙</div><div class="c" style="left:880px">18445615485</div><div class="c" style="left:1052px">北京市 / 直辖区 /<br>东城区</div><div class="c" style="left:1225px">朝阳门北大街1号2<br>8层</div><div class="c" style="left:1398px">正常</div><div class="c" style="left:1570px">2年后</div><div class="c" style="left:1742px">21 小时前</div><div class="c" style="left:1915px">21 小时前</div><div class="c" style="left:2089.5px"><span class="op" style="display:flex;align-items:center"><svg style="margin-right:2px;margin-top:2px" width="13" height="13" viewBox="0 0 13 13" fill="none" stroke="#e6a23c" stroke-width="1.1"><path d="M6.5,0.9H0.6V12.4H12.1V7"/><path d="M5.2,7.8L11.2,1.6Q12,1.3 12.2,2.2L6.1,8.5Z" stroke-width="1"/></svg>编辑</span><span class="del" style="display:flex;align-items:center;margin-left:15.5px"><svg style="margin-right:1px;margin-top:1px" width="15" height="16" viewBox="0 0 15 16" fill="none" stroke="#f56c6c" stroke-width="1.1"><path d="M0.6,2.6H14.4M5,2.6V0.8H10V2.6M2.3,2.6V15H12.7V2.6M5.8,5.5V11M9.2,5.5V11"/></svg>删除</span></div></div>
<div class="row" style="top:476px;height:80px"><div class="c" style="left:15px">szmc</div><div class="lg" style="position:absolute;left:190px;top:10px"><svg width="50" height="50" viewBox="0 0 50 50" fill="none" stroke="#21a04a" stroke-width="5.7"><path d="M9.72,4.5 A16.3,16.3 0 0 0 42.08,4.5"/><path d="M9.76,45 A16.3,16.3 0 0 1 42.04,45"/><rect x="24" y="14" width="4.2" height="21" fill="#fff" stroke="none"/><path d="M21.1,4V45.1M30.95,4V45.1" stroke-width="5.7"/><path d="M24,19.2H28.2M24,29.9H28.2" stroke-width="3.8"/></svg></div><div class="c" style="left:362px">深圳市地铁集团</div><div class="c" style="left:535px">szmc@qq.com</div><div class="c" style="left:707px">辛杰</div><div class="c" style="left:880px">0755-88961818</div><div class="c" style="left:1052px">广东省 / 深圳市 /<br>福田区</div><div class="c" style="left:1225px">福中一路1016号<br>地铁大厦27-31层</div><div class="c" style="left:1398px">正常</div><div class="c" style="left:1570px">2年后</div><div class="c" style="left:1742px">21 小时前</div><div class="c" style="left:1915px">21 小时前</div><div class="c" style="left:2089.5px"><span class="op" style="display:flex;align-items:center"><svg style="margin-right:2px;margin-top:2px" width="13" height="13" viewBox="0 0 13 13" fill="none" stroke="#e6a23c" stroke-width="1.1"><path d="M6.5,0.9H0.6V12.4H12.1V7"/><path d="M5.2,7.8L11.2,1.6Q12,1.3 12.2,2.2L6.1,8.5Z" stroke-width="1"/></svg>编辑</span><span class="del" style="display:flex;align-items:center;margin-left:15.5px"><svg style="margin-right:1px;margin-top:1px" width="15" height="16" viewBox="0 0 15 16" fill="none" stroke="#f56c6c" stroke-width="1.1"><path d="M0.6,2.6H14.4M5,2.6V0.8H10V2.6M2.3,2.6V15H12.7V2.6M5.8,5.5V11M9.2,5.5V11"/></svg>删除</span></div></div>
</div>
<div class="inp" style="left:300px;top:807px;width:159px;height:40px"><span style="position:absolute;left:36px;top:0;line-height:38px;font-size:17.5px;color:#606266">10条/页</span><svg style="position:absolute;left:130px;top:15px" width="14" height="9" viewBox="0 0 14 9" fill="none" stroke="#a8abb2" stroke-width="1.2"><path d="M1,1.5L7,7.5L13,1.5"/></svg></div>
<div class="pg" style="left:480px;top:807px;line-height:40px">共 6 条</div>
<div style="position:absolute;left:554px;top:807px;width:40px;height:40px;background:#f4f4f5;border-radius:3px"><svg style="position:absolute;left:16px;top:15px" width="7" height="11" viewBox="0 0 7 11" fill="none" stroke="#c0c4cc" stroke-width="1.2"><path d="M6,0.5L1,5.5L6,10.5"/></svg></div>
<div style="position:absolute;left:604px;top:807px;width:40px;height:40px;background:#409eff;border-radius:3px;color:#fff;font-weight:bold;font-size:17.5px;line-height:40px;text-align:center">1</div>
<div style="position:absolute;left:654px;top:807px;width:40px;height:40px;background:#f4f4f5;border-radius:3px"><svg style="position:absolute;left:17px;top:15px" width="7" height="11" viewBox="0 0 7 11" fill="none" stroke="#c0c4cc" stroke-width="1.2"><path d="M1,0.5L6,5.5L1,10.5"/></svg></div>
<div class="pg" style="left:719px;top:807px;line-height:40px">前往</div>
<div class="inp" style="left:764px;top:807px;width:70px;height:40px;text-align:center;line-height:38px;font-size:17.5px;color:#606266">1</div>
<div class="pg" style="left:844px;top:807px;line-height:40px">页</div>
<div id="botline"></div>
</body></html>
